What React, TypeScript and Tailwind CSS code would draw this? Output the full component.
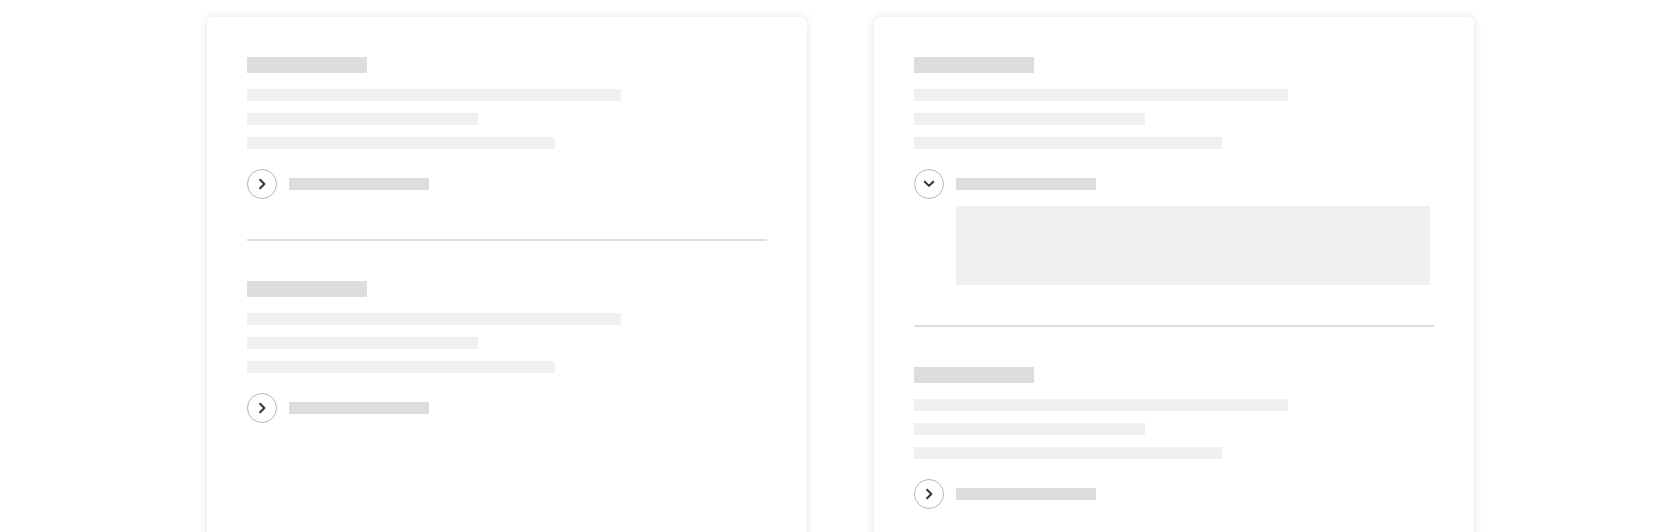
function Chevron({ open }: { open: boolean }) {
  return (
    <div className="flex h-[30px] w-[30px] shrink-0 items-center justify-center rounded-full border border-[#b4b4b4] bg-white">
      <svg width="30" height="30" viewBox="0 0 30 30" fill="none" stroke="#363636" strokeWidth="2.2" strokeLinecap="round" strokeLinejoin="round">
        {open ? <path d="M10.5 12.5 L15 17 L19.5 12.5" /> : <path d="M13 10.5 L17.5 15 L13 19.5" />}
      </svg>
    </div>
  );
}

function Section({ open = false }: { open?: boolean }) {
  return (
    <div>
      <div className="h-4 w-[120px] bg-[#dddddd]" />
      <div className="mt-4 h-3 w-[374px] bg-[#f0f0f0]" />
      <div className="mt-3 h-3 w-[231px] bg-[#f0f0f0]" />
      <div className="mt-3 h-3 w-[308px] bg-[#f0f0f0]" />
      <div className="mt-5 flex items-center gap-3">
        <Chevron open={open} />
        <div className="h-3 w-[140px] bg-[#dddddd]" />
      </div>
      {/* expanded panel */}
      {open && <div className="ml-[42px] mt-[7px] h-[79px] w-[474px] bg-[#f0f0f0]" />}
    </div>
  );
}

function Divider() {
  return <div className="my-10 h-[2px] w-full bg-[#dddddd]" />;
}

function Card({ firstOpen }: { firstOpen: boolean }) {
  return (
    <div className="w-[600px] rounded-md bg-white p-10 shadow-[0_0_8px_rgba(0,0,0,0.12)]">
      <Section open={firstOpen} />
      <Divider />
      <Section />
    </div>
  );
}

export default function App() {
  return (
    <div className="min-h-screen bg-white pt-[17px] pb-8">
      <div className="mx-auto flex w-[1267px] items-stretch gap-[67px]">
        <Card firstOpen={false} />
        <Card firstOpen={true} />
      </div>
    </div>
  );
}
